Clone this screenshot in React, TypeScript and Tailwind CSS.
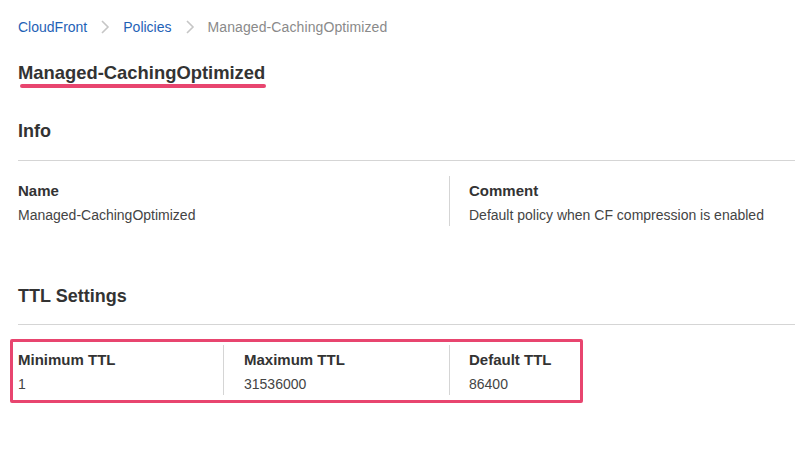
import React from "react";

const Chevron = () => (
  <svg width="10" height="16" viewBox="0 0 10 16" className="mx-[13px] shrink-0">
    <polyline points="2,2 8,8 2,14" fill="none" stroke="#c6c6c6" strokeWidth="1.6" />
  </svg>
);

export default function App() {
  return (
    <div
      className="w-[795px] h-[457px] bg-white overflow-hidden pl-[18px] text-[#444]"
      style={{ fontFamily: '"Liberation Sans", Arial, Helvetica, sans-serif' }}
    >
      {/* Breadcrumb */}
      <div className="flex items-center h-[20px] mt-[17px] text-[14px] leading-[20px]">
        <span className="text-[#1f62b6]">CloudFront</span>
        <Chevron />
        <span className="text-[#1f62b6]">Policies</span>
        <Chevron />
        <span className="text-[#8a8a8a] tracking-[0.1px]">Managed-CachingOptimized</span>
      </div>

      {/* Title */}
      <h1 className="mt-[24px] text-[18.4px] leading-[24px] font-bold text-[#333]">
        Managed-CachingOptimized
      </h1>
      <div className="ml-[2px] mt-[-1px] h-[4px] w-[246px] rounded-full bg-[#e8456f]" />

      {/* Info */}
      <h2 className="mt-[31px] text-[18px] leading-[24px] font-bold text-[#333] pb-[17px] border-b border-[#d5d5d5]">
        Info
      </h2>
      <div className="flex mt-[15px]">
        <div className="w-[431px] pt-[5px] pb-[1px]">
          <div className="text-[15px] leading-[20px] font-bold text-[#333]">Name</div>
          <div className="mt-[4px] text-[14px] leading-[20px]">Managed-CachingOptimized</div>
        </div>
        <div className="border-l border-[#d5d5d5] pl-[19px] pt-[5px] pb-[1px]">
          <div className="text-[15px] leading-[20px] font-bold text-[#333]">Comment</div>
          <div className="mt-[4px] text-[14px] leading-[20px]">
            Default policy when CF compression is enabled
          </div>
        </div>
      </div>

      {/* TTL Settings */}
      <h2 className="mt-[58px] text-[18px] leading-[24px] font-bold text-[#333] pb-[16px] border-b border-[#d5d5d5]">
        TTL Settings
      </h2>
      <div className="mt-[14px] ml-[-8px] w-[573px] border-[3px] border-[#e8456f] rounded-[2px] pl-[5px] pt-[3px] pb-[5px] flex">
        <div className="w-[205px] pt-[5px] pb-[1px]">
          <div className="text-[15px] leading-[20px] font-bold text-[#333]">Minimum TTL</div>
          <div className="mt-[4px] text-[14px] leading-[20px]">1</div>
        </div>
        <div className="w-[226px] border-l border-[#d5d5d5] pl-[20px] pt-[5px] pb-[1px]">
          <div className="text-[15px] leading-[20px] font-bold text-[#333]">Maximum TTL</div>
          <div className="mt-[4px] text-[14px] leading-[20px]">31536000</div>
        </div>
        <div className="border-l border-[#d5d5d5] pl-[19px] pt-[5px] pb-[1px]">
          <div className="text-[15px] leading-[20px] font-bold text-[#333]">Default TTL</div>
          <div className="mt-[4px] text-[14px] leading-[20px]">86400</div>
        </div>
      </div>
    </div>
  );
}
